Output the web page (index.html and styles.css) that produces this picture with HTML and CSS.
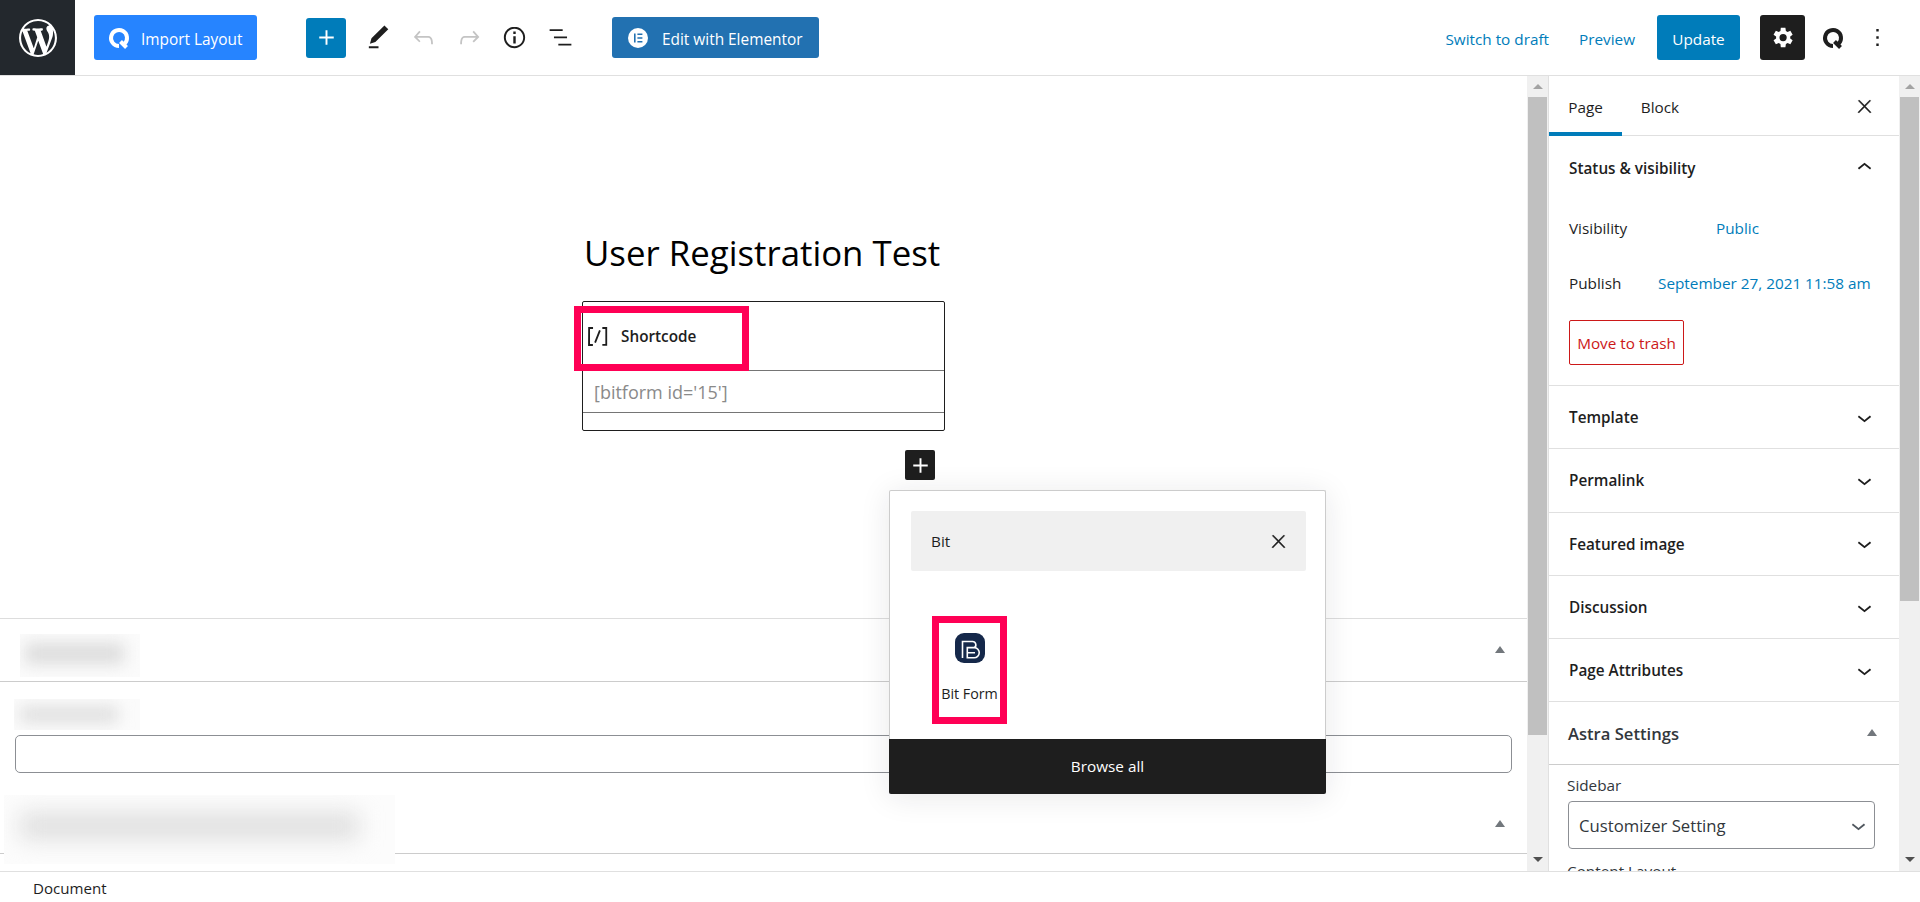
FILE: index.html
```html
<!DOCTYPE html>
<html lang="en">
<head>
    <meta charset="UTF-8">
    <meta name="viewport" content="width=device-width, initial-scale=1.0">
    <title>Edit Page</title>
    <link rel="stylesheet" href="styles.css">
</head>
<body>
    <header class="topbar">
        <div class="wp-logo">
            <svg viewBox="0 0 20 20" width="38" height="38" fill="#fff"><path d="M20 10c0-5.51-4.49-10-10-10C4.48 0 0 4.49 0 10c0 5.52 4.48 10 10 10 5.51 0 10-4.48 10-10zM7.78 15.37L4.37 6.22c.55-.02 1.17-.08 1.17-.08.5-.06.44-1.13-.06-1.11 0 0-1.45.11-2.37.11-.18 0-.37 0-.58-.01C4.12 2.69 6.87 1.11 10 1.11c2.33 0 4.45.87 6.05 2.34-.68-.11-1.65.39-1.65 1.58 0 .74.45 1.36.9 2.1.35.61.55 1.36.55 2.46 0 1.49-1.4 5-1.4 5l-3.03-8.37c.54-.02.82-.17.82-.17.5-.05.44-1.25-.06-1.22 0 0-1.44.12-2.38.12-.87 0-2.33-.12-2.33-.12-.5-.03-.56 1.2-.06 1.22l.92.08 1.26 3.41zM17.41 10c.24-.64.74-1.87.43-4.25.7 1.29 1.05 2.71 1.05 4.25 0 3.29-1.73 6.24-4.4 7.78.97-2.59 1.94-5.2 2.92-7.78zM6.1 18.09C3.12 16.65 1.11 13.53 1.11 10c0-1.3.23-2.48.72-3.59C3.25 10.3 4.67 14.2 6.1 18.09zm4.03-6.63l2.58 6.98c-.86.29-1.76.45-2.71.45-.79 0-1.57-.11-2.29-.33.81-2.38 1.62-4.74 2.42-7.1z"/></svg>
        </div>

        <button class="import-btn" type="button">
            <svg viewBox="0 0 24 24" width="24" height="24"><path d="M12 20A8 8 0 1 1 17.66 17.66" fill="none" stroke="#fff" stroke-width="4"/><path d="M13.5 15.5l6 6" fill="none" stroke="#fff" stroke-width="4"/></svg>
            <span class="btn-label">Import Layout</span>
        </button>

        <div class="tools">
            <button class="add-btn" type="button">
                <svg viewBox="0 0 24 24" width="29" height="29" fill="#fff"><path d="M18 11.2h-5.2V6h-1.6v5.2H6v1.6h5.2V18h1.6v-5.2H18z"/></svg>
            </button>
            <svg class="tool" viewBox="0 0 24 24" width="29" height="29" fill="#1e1e1e"><path d="M20.1 5.1L16.9 2 6.2 12.7l-1.3 4.4 4.5-1.3L20.1 5.1zM4 20.8h8v-1.5H4v1.5z"/></svg>
            <svg class="tool" viewBox="0 0 24 24" width="29" height="29" fill="#c4c4c4"><path d="M18.3 11.7c-.6-.6-1.4-.9-2.3-.9H6.7l2.9-3.3-1.1-1-4.5 5L8.5 16l1-1-2.7-2.7H16c.5 0 .9.2 1.3.5 1 1 1 3.4 1 4.5v.3h1.5v-.2c0-1.5 0-4.3-1.5-5.7z"/></svg>
            <svg class="tool" viewBox="0 0 24 24" width="29" height="29" fill="#c4c4c4"><path d="M15.6 6.5l-1.1 1 2.9 3.3H8c-.9 0-1.7.3-2.3.9-1.4 1.5-1.4 4.2-1.4 5.6v.2h1.5v-.3c0-1.1 0-3.5 1-4.5.3-.3.7-.5 1.3-.5h9.2L14.5 15l1.1 1.1 4.6-4.6-4.6-5z"/></svg>
            <svg class="tool" viewBox="0 0 24 24" width="29" height="29" fill="#1e1e1e"><path d="M12 3.2c-4.8 0-8.8 3.9-8.8 8.8 0 4.8 3.9 8.8 8.8 8.8 4.8 0 8.8-3.9 8.8-8.8 0-4.8-4-8.8-8.8-8.8zm0 16c-4 0-7.2-3.3-7.2-7.2C4.8 8 8 4.8 12 4.8s7.2 3.3 7.2 7.2c0 4-3.2 7.2-7.2 7.2zM11 17h2v-6h-2v6zm0-8h2V7h-2v2z"/></svg>
            <svg class="tool" viewBox="0 0 24 24" width="29" height="29" fill="#1e1e1e"><path d="M13.8 5.2H3v1.5h10.8V5.2zm-3.6 12v1.5H21v-1.5H10.2zm7.2-6H6.6v1.5h10.8v-1.5z"/></svg>
        </div>

        <button class="elementor-btn" type="button">
            <svg viewBox="0 0 22 22" width="22" height="22"><circle cx="11" cy="11" r="10" fill="#fff"/><path d="M7 6.5h1.6v9H7zM10.4 6.5h5v1.6h-5zM10.4 10.2h5v1.6h-5zM10.4 13.9h5v1.6h-5z" fill="#2271b1"/></svg>
            <span class="btn-label">Edit with Elementor</span>
        </button>

        <div class="topbar-right">
            <a class="top-link">Switch to draft</a>
            <a class="top-link">Preview</a>
            <button class="update-btn" type="button">Update</button>
            <button class="settings-btn" type="button">
                <svg viewBox="0 0 24 24" width="29" height="29" fill="#fff"><path fill-rule="evenodd" d="M18.4 12.8v-1.6l2-1.5-1.9-3.3-2.3 1c-.4-.3-.9-.6-1.4-.8L14.4 4h-3.8l-.3 2.6c-.5.2-1 .5-1.4.8l-2.4-1-1.9 3.3 2.1 1.5v1.6l-2.1 1.5 1.9 3.3 2.4-1c.4.3.9.6 1.4.8l.3 2.6h3.8l.4-2.6c.5-.2 1-.5 1.4-.8l2.3 1 1.9-3.3-2-1.5zM12.5 15a3 3 0 1 1 0-6 3 3 0 0 1 0 6z"/></svg>
            </button>
            <svg class="q-logo" viewBox="0 0 24 24" width="24" height="24"><path d="M12 20A8 8 0 1 1 17.66 17.66" fill="none" stroke="#1e1e1e" stroke-width="4"/><path d="M13.5 15.5l6 6" fill="none" stroke="#1e1e1e" stroke-width="4"/></svg>
            <svg class="more" viewBox="0 0 24 24" width="29" height="29" fill="#1e1e1e"><path d="M13 19h-2v-2h2v2zm0-6h-2v-2h2v2zm0-6h-2V5h2v2z"/></svg>
        </div>
    </header>

    <div class="workspace">
        <main class="editor">
            <section class="canvas">
                <h1 class="post-title">User Registration Test</h1>
                <div class="shortcode-block">
                    <div class="shortcode-head">
                        <svg viewBox="0 0 24 24" width="29" height="29" fill="#1e1e1e"><path d="M16 4.2v1.5h2.5v12.5H16v1.5h4V4.2h-4zM4.2 19.8h4v-1.5H5.8V5.8h2.5V4.2h-4l-.1 15.6zm5.1-3.1l1.4.6 4-10-1.4-.6-4 10z"/></svg>
                        <span>Shortcode</span>
                        <div class="mark mark-shortcode"></div>
                    </div>
                    <div class="shortcode-input">[bitform id='15']</div>
                    <div class="shortcode-foot"></div>
                </div>
                <button class="inline-add" type="button">
                    <svg viewBox="0 0 24 24" width="29" height="29" fill="#fff"><path d="M18 11.2h-5.2V6h-1.6v5.2H6v1.6h5.2V18h1.6v-5.2H18z"/></svg>
                </button>

                <div class="inserter">
                    <div class="inserter-search">
                        <span>Bit</span>
                        <svg viewBox="0 0 24 24" width="21" height="21" fill="#1e1e1e"><path d="M13 11.8l6.1-6.3-1-1-6.1 6.2-6.1-6.2-1 1 6.1 6.3-6.5 6.7 1 1 6.5-6.6 6.5 6.6 1-1z" stroke="#1e1e1e" stroke-width=".5"/></svg>
                    </div>
                    <div class="inserter-results">
                        <div class="block-item">
                            <svg viewBox="0 0 30 30" width="30" height="30">
                                <rect width="30" height="30" rx="9" fill="#15284a"/>
                                <path d="M7.5 25V8.5H17.5a3.3 3.3 0 0 1 1.8 6.1a5 5 0 0 1-.3 10.2H12.3V14.6H19.3M12.3 19.7H20" fill="none" stroke="#fff" stroke-width="1.6"/>
                            </svg>
                            <span>Bit Form</span>
                        </div>
                    </div>
                    <div class="browse-all">Browse all</div>
                </div>
            </section>

            <section class="metabox">
                <div class="metabox-head head-small">
                    <div class="smudge smudge-one"><i></i></div>
                    <span class="triangle"></span>
                </div>
                <div class="metabox-body">
                    <div class="smudge smudge-two"><i></i></div>
                    <div class="blank-input"></div>
                </div>
                <div class="metabox-head head-last">
                    <div class="smudge smudge-three"><i></i></div>
                    <span class="triangle"></span>
                </div>
            </section>
        </main>

        <div class="scrollbar">
            <span class="arrow-up"></span>
            <div class="track"><div class="thumb thumb-main"></div></div>
            <span class="arrow-down"></span>
        </div>

        <aside class="sidebar">
            <div class="tabs">
                <span class="tab tab-active">Page</span>
                <span class="tab">Block</span>
                <svg class="tabs-close" viewBox="0 0 24 24" width="21" height="21" fill="#1e1e1e"><path d="M13 11.8l6.1-6.3-1-1-6.1 6.2-6.1-6.2-1 1 6.1 6.3-6.5 6.7 1 1 6.5-6.6 6.5 6.6 1-1z" stroke="#1e1e1e" stroke-width=".5"/></svg>
            </div>

            <div class="panel panel-open">
                <div class="panel-title">
                    <span>Status &amp; visibility</span>
                    <svg viewBox="0 0 24 24" width="29" height="29" fill="#1e1e1e"><path d="M6.5 12.4L12 8l5.5 4.4-.9 1.2L12 10l-4.5 3.6-1-1.2z"/></svg>
                </div>
                <div class="status-row row-visibility">
                    <span class="status-label">Visibility</span>
                    <a class="status-value">Public</a>
                </div>
                <div class="status-row row-publish">
                    <span class="status-label">Publish</span>
                    <a class="status-value">September 27, 2021 11:58 am</a>
                </div>
                <button class="trash-btn" type="button">Move to trash</button>
            </div>

            <div class="panel panel-title">
                <span>Template</span>
                <svg viewBox="0 0 24 24" width="29" height="29" fill="#1e1e1e"><path d="M17.5 11.6L12 16l-5.5-4.4.9-1.2L12 14l4.5-3.6 1 1.2z"/></svg>
            </div>
            <div class="panel panel-title">
                <span>Permalink</span>
                <svg viewBox="0 0 24 24" width="29" height="29" fill="#1e1e1e"><path d="M17.5 11.6L12 16l-5.5-4.4.9-1.2L12 14l4.5-3.6 1 1.2z"/></svg>
            </div>
            <div class="panel panel-title">
                <span>Featured image</span>
                <svg viewBox="0 0 24 24" width="29" height="29" fill="#1e1e1e"><path d="M17.5 11.6L12 16l-5.5-4.4.9-1.2L12 14l4.5-3.6 1 1.2z"/></svg>
            </div>
            <div class="panel panel-title">
                <span>Discussion</span>
                <svg viewBox="0 0 24 24" width="29" height="29" fill="#1e1e1e"><path d="M17.5 11.6L12 16l-5.5-4.4.9-1.2L12 14l4.5-3.6 1 1.2z"/></svg>
            </div>
            <div class="panel panel-title">
                <span>Page Attributes</span>
                <svg viewBox="0 0 24 24" width="29" height="29" fill="#1e1e1e"><path d="M17.5 11.6L12 16l-5.5-4.4.9-1.2L12 14l4.5-3.6 1 1.2z"/></svg>
            </div>

            <div class="astra-head">
                <span>Astra Settings</span>
                <span class="triangle"></span>
            </div>
            <div class="astra-body">
                <label class="astra-label">Sidebar</label>
                <div class="astra-select">
                    <span>Customizer Setting</span>
                    <svg viewBox="0 0 24 24" width="29" height="29" fill="#50575e"><path d="M17.5 11.6L12 16l-5.5-4.4.9-1.2L12 14l4.5-3.6 1 1.2z"/></svg>
                </div>
                <label class="astra-label label-cut">Content Layout</label>
            </div>
        </aside>

        <div class="scrollbar">
            <span class="arrow-up"></span>
            <div class="track"><div class="thumb thumb-side"></div></div>
            <span class="arrow-down"></span>
        </div>
    </div>

    <footer class="footer">Document</footer>
</body>
</html>
```

FILE: styles.css
```css
* {
    box-sizing: border-box;
}

html, body {
    margin: 0;
    height: 902px;
    overflow: hidden;
}

body {
    display: flex;
    flex-direction: column;
    font-family: "Open Sans", "Noto Sans", sans-serif;
    font-size: 15.3px;
    color: #1e1e1e;
    background-color: #fff;
}

button {
    font-family: inherit;
    border: none;
    cursor: pointer;
}

svg {
    display: block;
    flex-shrink: 0;
}

/* top bar */
.topbar {
    display: flex;
    align-items: center;
    height: 76px;
    flex-shrink: 0;
    border-bottom: 1px solid #e0e0e0;
}

.wp-logo {
    display: flex;
    align-items: center;
    justify-content: center;
    width: 75px;
    height: 75px;
    background-color: #23282d;
}

.import-btn {
    display: flex;
    align-items: center;
    gap: 10px;
    width: 163px;
    height: 45px;
    margin-left: 19px;
    padding-left: 13px;
    font-size: 15.4px;
    color: #fff;
    background-color: #2684ff;
    border-radius: 3px;
}

.btn-label {
    margin-top: 3px;
}

.tools {
    display: flex;
    align-items: center;
    gap: 16.5px;
    margin-left: 49px;
}

.add-btn {
    display: flex;
    align-items: center;
    justify-content: center;
    width: 40px;
    height: 40px;
    padding: 0;
    margin-right: 1px;
    background-color: #007cba;
    border-radius: 3px;
}

.elementor-btn {
    display: flex;
    align-items: center;
    gap: 13px;
    width: 207px;
    height: 41px;
    margin-left: 37.5px;
    padding-left: 15px;
    font-size: 15.4px;
    color: #fff;
    background-color: #2271b1;
    border-radius: 3px;
}

.topbar-right {
    display: flex;
    align-items: center;
    margin-left: auto;
    padding-right: 28px;
}

.top-link {
    margin-right: 30px;
    padding-top: 2px;
    color: #007cba;
}

.top-link + .top-link {
    margin-right: 22px;
}

.update-btn {
    width: 83px;
    height: 45px;
    padding: 2px 0 0;
    font-size: 15.3px;
    color: #fff;
    background-color: #007cba;
    border-radius: 3px;
}

.settings-btn {
    display: flex;
    align-items: center;
    justify-content: center;
    width: 45px;
    height: 45px;
    margin-left: 20px;
    padding: 0;
    background-color: #1e1e1e;
    border-radius: 3px;
}

.q-logo {
    margin-left: 16px;
}

.more {
    margin-left: 18px;
}

/* workspace */
.workspace {
    display: flex;
    height: 795px;
    flex-shrink: 0;
}

.editor {
    flex: 1;
    min-width: 0;
}

.canvas {
    position: relative;
    height: 542px;
    padding-top: 150px;
    padding-left: 582px;
}

.post-title {
    margin: 0 0 0 2px;
    height: 75px;
    font-size: 34.8px;
    font-weight: 400;
    line-height: 54px;
    color: #000;
    white-space: nowrap;
}

.shortcode-block {
    width: 363px;
    height: 130px;
    border: 1px solid #1e1e1e;
    border-radius: 2px;
}

.shortcode-head {
    position: relative;
    display: flex;
    align-items: center;
    height: 69px;
    font-size: 15.3px;
    font-weight: 560;
    border-bottom: 1px solid #757575;
}

.shortcode-head span {
    margin-left: 9px;
}

.shortcode-input {
    height: 42px;
    padding-left: 11px;
    font-size: 18px;
    line-height: 42px;
    color: #8a8a8a;
    border-bottom: 1px solid #757575;
}

.shortcode-foot {
    height: 17px;
}

.mark {
    position: absolute;
    border: 7px solid #ff0055;
}

.mark-shortcode {
    left: -9px;
    top: 4px;
    width: 175px;
    height: 65px;
}

.inline-add {
    position: absolute;
    left: 905px;
    top: 374px;
    display: flex;
    align-items: center;
    justify-content: center;
    width: 30px;
    height: 30px;
    padding: 0;
    background-color: #1e1e1e;
    border-radius: 2px;
}

.inserter {
    position: absolute;
    left: 889px;
    top: 414px;
    z-index: 2;
    display: flex;
    flex-direction: column;
    width: 437px;
    height: 304px;
    background-color: #fff;
    border: 1px solid #ccc;
    border-bottom: none;
    border-radius: 2px;
    box-shadow: 0 3px 30px rgba(25, 30, 35, 0.1);
}

.inserter-search {
    display: flex;
    align-items: center;
    justify-content: space-between;
    height: 60px;
    margin: 20px 19px 0 21px;
    padding: 0 17px 0 20px;
    background-color: #f0f0f0;
    border-radius: 2px;
}

.inserter-results {
    flex: 1;
    padding: 45px 0 0 42px;
}

.block-item {
    display: flex;
    flex-direction: column;
    align-items: center;
    width: 75px;
    height: 108px;
    padding-top: 7px;
    font-size: 14.3px;
    border: 7px solid #ff0055;
}

.block-item svg {
    margin-top: 3px;
}

.block-item span {
    margin-top: 21px;
    white-space: nowrap;
}

.browse-all {
    height: 55px;
    margin: 0 -1px;
    font-size: 15.3px;
    line-height: 55px;
    text-align: center;
    color: #fff;
    background-color: #1e1e1e;
    border-radius: 0 0 2px 2px;
}

/* boxes under the content */
.metabox {
    border-top: 1px solid #ddd;
}

.metabox-head {
    position: relative;
    display: flex;
    align-items: center;
    justify-content: space-between;
    padding-right: 20px;
}

.head-small {
    height: 63px;
    padding-left: 20px;
    border-bottom: 1px solid #ccc;
}

.head-last {
    height: 59px;
    margin-top: 21px;
    padding-left: 4px;
    border-bottom: 1px solid #ccc;
}

.metabox-body {
    height: 92px;
    padding: 17px 15px 0 14px;
}

.blank-input {
    height: 38px;
    margin-left: 1px;
    border: 1px solid #8c8f94;
    border-radius: 5px;
}

.smudge {
    position: relative;
    overflow: hidden;
    background-color: #fbfbfb;
}

.smudge i {
    position: absolute;
    display: block;
    background-color: #dcdcdc;
    filter: blur(8px);
}

.smudge-one {
    width: 120px;
    height: 43px;
    margin-top: 10px;
}

.smudge-one i {
    left: 5px;
    right: 16px;
    top: 9px;
    bottom: 13px;
}

.smudge-two {
    width: 126px;
    height: 31px;
    margin-bottom: 5px;
}

.smudge-two i {
    left: 6px;
    right: 22px;
    top: 8px;
    bottom: 8px;
}

.smudge-three {
    align-self: flex-start;
    width: 391px;
    height: 69px;
    z-index: 1;
    background-color: #fcfcfc;
}

.smudge-three i {
    left: 16px;
    right: 36px;
    top: 17px;
    bottom: 24px;
    background-color: #e0e0e0;
    filter: blur(11px);
}

.triangle {
    width: 0;
    height: 0;
    margin-top: -2px;
    margin-right: 2px;
    border-left: 5px solid transparent;
    border-right: 5px solid transparent;
    border-bottom: 7px solid #72777c;
}

/* scrollbars */
.scrollbar {
    display: flex;
    flex-direction: column;
    align-items: center;
    width: 21px;
    height: 795px;
    padding: 0 1px;
    background-color: #f0f0f0;
}

.track {
    flex: 1;
    width: 100%;
}

.thumb {
    background-color: #c0c0c0;
}

.thumb-main {
    height: 638px;
}

.thumb-side {
    height: 504px;
}

.arrow-up,
.arrow-down {
    display: block;
    flex-shrink: 0;
    width: 0;
    height: 0;
    border-left: 5px solid transparent;
    border-right: 5px solid transparent;
}

.arrow-up {
    margin: 8px 0;
    border-bottom: 5px solid #a3a3a3;
}

.arrow-down {
    margin: 8px 0 9px;
    border-top: 5px solid #505050;
}

/* settings sidebar */
.sidebar {
    width: 351px;
    overflow: hidden;
    background-color: #fff;
    border-left: 1px solid #e0e0e0;
}

.tabs {
    position: relative;
    display: flex;
    height: 60px;
    border-bottom: 1px solid #e0e0e0;
}

.tab {
    display: flex;
    align-items: center;
    justify-content: center;
    width: 73px;
    height: 60px;
    padding-top: 2px;
}

.tab + .tab {
    width: 76px;
}

.tab-active {
    padding-top: 6px;
    border-bottom: 4px solid #007cba;
}

.tabs-close {
    margin: 20px 24px 0 auto;
}

.panel {
    border-bottom: 1px solid #e0e0e0;
}

.panel-title {
    display: flex;
    align-items: center;
    justify-content: space-between;
    height: 63.3px;
    padding: 0 20px 0 20px;
    font-weight: 560;
}

.panel-open {
    height: 250px;
}

.status-row {
    display: flex;
    align-items: center;
    height: 20px;
    padding-left: 20px;
}

.row-visibility {
    margin-top: 19px;
}

.row-publish {
    margin-top: 35px;
}

.status-label {
    width: 89px;
}

.status-value {
    color: #007cba;
    white-space: nowrap;
}

.row-visibility .status-value {
    margin-left: 58px;
}

.trash-btn {
    display: block;
    width: 115px;
    height: 45px;
    margin: 27px 0 0 20px;
    padding: 0;
    font-size: 15.3px;
    color: #cc1818;
    background-color: #fff;
    border: 1px solid #cc1818;
    border-radius: 2px;
}

.astra-head {
    display: flex;
    align-items: center;
    justify-content: space-between;
    height: 63px;
    padding: 0 20px 0 19px;
    font-size: 16.6px;
    font-weight: 600;
    color: #32373c;
    border-bottom: 1px solid #ccc;
}

.astra-body {
    padding: 8px 18px 0 18px;
}

.astra-label {
    display: block;
    height: 28px;
    line-height: 24px;
    color: #32373c;
}

.astra-select {
    display: flex;
    align-items: center;
    justify-content: space-between;
    width: 307px;
    height: 48px;
    margin-left: 1px;
    padding: 0 1px 0 10px;
    font-size: 16.7px;
    color: #32373c;
    border: 1px solid #8c8f94;
    border-radius: 4px;
}

.label-cut {
    margin-top: 10px;
}

.footer {
    position: relative;
    z-index: 3;
    height: 31px;
    padding-left: 33px;
    font-size: 15.1px;
    line-height: 32px;
    background-color: #fff;
    border-top: 1px solid #e0e0e0;
}
```
